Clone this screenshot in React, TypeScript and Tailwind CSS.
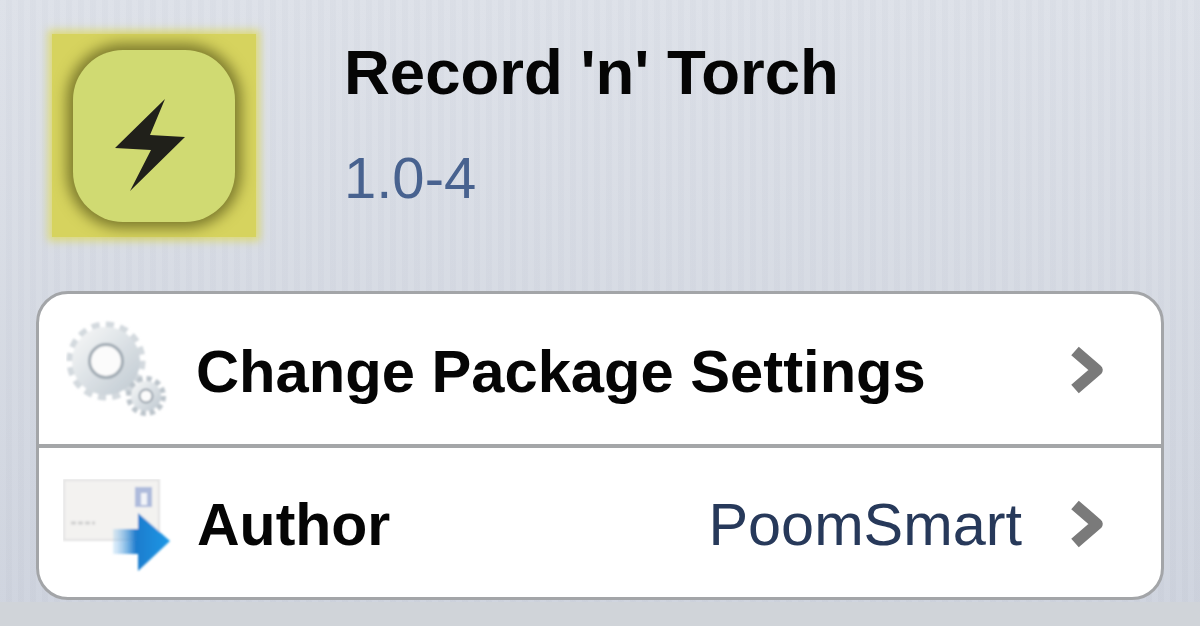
const Gears = () => (
  <svg width="110" height="104" viewBox="0 0 110 104" className="shrink-0">
    <defs>
      <linearGradient id="gearA" x1="0" y1="0" x2="1" y2="1">
        <stop offset="0" stopColor="#f1f3f4" />
        <stop offset="1" stopColor="#c6cfd6" />
      </linearGradient>
      <filter id="soft"><feGaussianBlur stdDeviation="1.2" /></filter>
    </defs>
    <g filter="url(#soft)">
      <circle cx="40" cy="44" r="36" fill="none" stroke="#d3d9de" strokeWidth="7" strokeDasharray="8 6.1" />
      <circle cx="40" cy="44" r="25" fill="none" stroke="url(#gearA)" strokeWidth="18" />
      <circle cx="40" cy="44" r="16.5" fill="#fbfbfb" stroke="#a0aab3" strokeWidth="3" />
      <circle cx="80" cy="79" r="17" fill="none" stroke="#bcc4cb" strokeWidth="6" strokeDasharray="5 3.9" />
      <circle cx="80" cy="79" r="11" fill="none" stroke="url(#gearA)" strokeWidth="8" />
      <circle cx="80" cy="79" r="6.5" fill="#fbfbfb" stroke="#98a2ac" strokeWidth="2" />
    </g>
  </svg>
)

const MailArrow = () => (
  <svg width="110" height="94" viewBox="0 0 110 94" className="shrink-0 mt-[6px]">
    <defs>
      <linearGradient id="arrowA" x1="0" y1="0" x2="1" y2="0">
        <stop offset="0" stopColor="#8cc4ee" stopOpacity="0.25" />
        <stop offset="0.4" stopColor="#1f7ccd" />
        <stop offset="1" stopColor="#1d98e6" />
      </linearGradient>
      <filter id="softB"><feGaussianBlur stdDeviation="1" /></filter>
    </defs>
    <g filter="url(#softB)">
      <rect x="1" y="1" width="95" height="60" fill="#f3f2f0" stroke="#e2e2e2" strokeWidth="2" />
      <rect x="72" y="8" width="17" height="20" fill="#aebbdc" />
      <rect x="78" y="14" width="6" height="12" fill="#f2f4f8" />
      <path d="M8 44h24" stroke="#cfcfcf" strokeWidth="3" strokeDasharray="5 2" />
      <path d="M50 50h25V34l32 28-32 30V75H50z" fill="url(#arrowA)" />
    </g>
  </svg>
)

const Chevron = () => (
  <svg width="36" height="50" viewBox="0 0 36 50" className="shrink-0 mt-[2px]">
    <path d="M6 6l22 19L6 44" fill="none" stroke="#7a7a7a" strokeWidth="11.5" strokeLinejoin="round" />
  </svg>
)

export default function App() {
  return (
    <div className="w-[1200px] h-[626px] overflow-hidden flex flex-col font-['Liberation_Sans',Arial,sans-serif] bg-[repeating-linear-gradient(90deg,rgba(255,255,255,0.05)_0px,rgba(255,255,255,0.05)_6px,rgba(0,0,0,0.008)_6px,rgba(0,0,0,0.008)_12px),linear-gradient(180deg,#dce0e8,#cdd2dd)]">
      {/* Package header */}
      <header className="flex h-[291px] shrink-0 pl-[52px] pt-[34px]">
        <div className="w-[204px] h-[203px] shrink-0 flex items-center justify-center bg-[#d6d35e] shadow-[0_0_8px_4px_#dcd97c]">
          <div className="w-[162px] h-[172px] rounded-[50px] flex items-center justify-center bg-[#d0da72] shadow-[0_0_14px_6px_#7b792c]">
            <svg width="70" height="92" viewBox="0 0 70 92" className="mt-[18px] mr-[8px]">
              <path d="M50 0L0 49 36 51 15 92 70 38 35 36z" fill="#20201a" />
            </svg>
          </div>
        </div>
        <div className="ml-[88px] -mt-[4px] flex flex-col">
          <h1 className="text-[63.5px] leading-[84px] font-bold text-[#050505]">Record 'n' Torch</h1>
          <p className="mt-[32px] text-[58px] leading-[64px] text-[#48628f]">1.0-4</p>
        </div>
      </header>

      {/* Settings group */}
      <div className="mx-9 h-[309px] shrink-0 rounded-[32px] border-[3px] border-[#a3a5a8] bg-white flex flex-col">
        <div className="h-[154px] shrink-0 flex items-center pl-[27px] pr-[56px] border-b-[4px] border-[#a4a6a8]">
          <Gears />
          <span className="ml-[20px] pt-[5px] flex-1 text-[59.7px] font-bold text-[#050505]">Change Package Settings</span>
          <Chevron />
        </div>
        <div className="flex-1 flex items-center pl-[24px] pr-[56px]">
          <MailArrow />
          <span className="ml-[24px] pt-[5px] flex-1 text-[59px] font-bold text-[#050505]">Author</span>
          <span className="mr-[47px] pt-[5px] text-[59.4px] text-[#27395a]">PoomSmart</span>
          <Chevron />
        </div>
      </div>

      {/* Bottom strip under the group */}
      <div className="mt-[2px] flex-1 bg-[#d0d4d9]" />
    </div>
  )
}
